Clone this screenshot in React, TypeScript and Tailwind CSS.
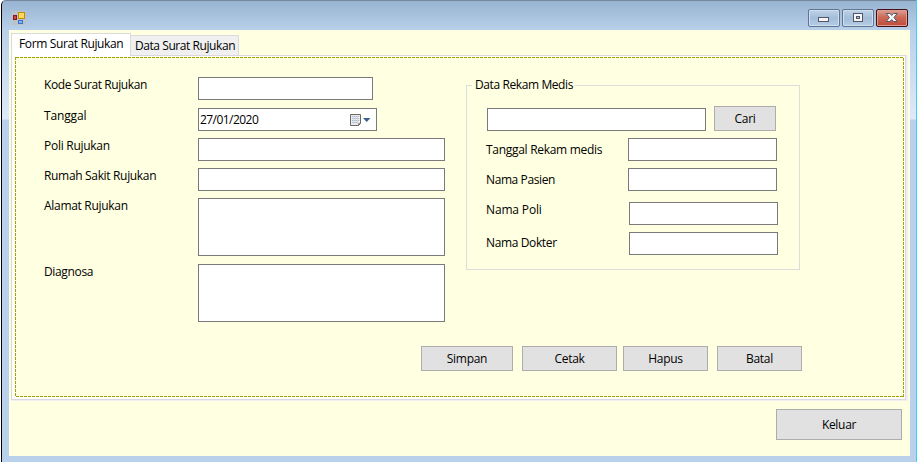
import React from "react";

function Field({ label, lw = "w-[154px]", className, box, track }: { label: string; lw?: string; className: string; box: string; track: string }) {
  return (
    <div className={`flex items-start ${className}`}>
      <span className={`${lw} shrink-0 leading-4 whitespace-nowrap ${track}`}>{label}</span>
      <div className={`shrink-0 border border-[#7a7a7a] bg-white ${box}`} />
    </div>
  );
}

function Button({ children, className }: { children: React.ReactNode; className: string }) {
  return (
    <button className={`flex shrink-0 items-center justify-center border border-[#adadad] bg-[#e1e1e1] leading-4 tracking-[-0.3px] ${className}`}>
      {children}
    </button>
  );
}

function Caption({ kind }: { kind: "min" | "max" | "close" }) {
  const close = kind === "close";
  return (
    <div
      className={`flex h-[18px] w-8 items-center justify-center rounded-[2px] border ${
        close
          ? "border-[#43101a] bg-linear-to-b from-[#dca096] from-0% via-[#cb6a57] via-45% to-[#c04a36] shadow-[inset_0_0_0_1px_#dd9d92]"
          : "border-[#5f7590] bg-linear-to-b from-[#c0d3e8] via-[#a3bdd9] to-[#b5cde6] shadow-[inset_0_0_0_1px_#cfdff0]"
      }`}
    >
      <svg width="14" height="12" viewBox="0 0 14 12" shapeRendering={close ? "auto" : "crispEdges"}>
        {kind === "min" && <rect x="1.5" y="5.5" width="10" height="4" rx="1" fill="#f6f6f6" stroke="#535666" />}
        {kind === "max" && (
          <>
            <rect x="2.5" y="1.5" width="9" height="8" fill="#f6f6f6" stroke="#535666" />
            <rect x="5.5" y="4.5" width="3" height="2" fill="#a9c1dc" stroke="#535666" />
          </>
        )}
        {close && (
          <path d="M1.2 1.5H4.9L6.7 3.4L8.5 1.5H12.2L9 5.5L12.2 9.5H8.5L6.7 7.6L4.9 9.5H1.2L4.4 5.5Z" fill="#f8f8f8" stroke="#535666" />
        )}
      </svg>
    </div>
  );
}

export default function App() {
  return (
    <div className="relative flex h-[462px] w-[917px] flex-col overflow-hidden rounded-tl-[5px] border-r border-l border-r-[#35d3f5] border-l-white bg-[#b9d1ea] font-['Open_Sans','Noto_Sans',sans-serif] text-[12px] text-black">
      <div className="flex min-h-0 flex-1 flex-col rounded-tl-[5px] border-t border-l border-t-[#74879d] border-l-black bg-[linear-gradient(to_bottom,#98b4d2_0px,#b9d1ea_30px,#dfeaf7_118px,#b9d1ea_119px)] pr-[6px] pb-[6px] pl-[7px]">
        <header className="flex h-[29px] shrink-0 justify-between pt-2 pr-[2px] pl-[3px]">
          <svg className="mt-[2px]" width="14" height="14" viewBox="0 0 14 14" shapeRendering="crispEdges">
            <rect width="14" height="14" fill="#bac3cc" />
            <rect x="6.5" y="1.5" width="6" height="6" fill="#ffd75b" stroke="#c18b08" />
            <rect x="1.5" y="4.5" width="3" height="4" fill="#c94b43" stroke="#8d1414" />
            <rect x="6.5" y="9.5" width="4" height="3" fill="#83b2f5" stroke="#3c6fcb" />
          </svg>
          <div className="flex gap-[2px]">
            <Caption kind="min" />
            <Caption kind="max" />
            <Caption kind="close" />
          </div>
        </header>

        <main className="flex min-h-0 flex-1 flex-col bg-[#ffffe1] pt-[3px] pl-[2px]">
          <nav className="flex h-[22px] shrink-0 items-end">
            <div className="z-10 -mb-px h-[23px] w-[120px] shrink-0 border border-b-0 border-[#dadada] bg-white pl-[7px] leading-[20px] tracking-[-0.37px] whitespace-nowrap">
              Form Surat Rujukan
            </div>
            <div className="h-5 w-[108px] shrink-0 border border-b-0 border-l-0 border-[#dadada] bg-[#f0f0f0] pl-1 leading-[20px] tracking-[-0.43px] whitespace-nowrap">
              Data Surat Rujukan
            </div>
          </nav>

          <section className="h-[346px] w-[897px] shrink-0 border-r-2 border-b border-[#f0f0f0]">
            <div className="h-[345px] w-[895px] border border-[#d9d9dc] bg-white pt-px pr-px pb-[2px] pl-[3px]">
              <div className="relative h-[340px] w-[889px] bg-[#ffffe1]">
                <svg className="pointer-events-none absolute inset-0" width="889" height="340" shapeRendering="crispEdges">
                  <rect x="0.5" y="0.5" width="888" height="339" fill="none" stroke="#a0a000" strokeDasharray="3 1" />
                </svg>
                <div className="flex h-[289px] items-start pt-5 pl-[29px]">
                  <div className="flex w-[422px] shrink-0 flex-col">
                    <Field label="Kode Surat Rujukan" track="tracking-[-0.4px]" className="h-[31px]" box="h-[23px] w-[175px]" />
                    <div className="flex h-[30px] items-start">
                      <span className="w-[154px] shrink-0 leading-4 tracking-[-0.15px]">Tanggal</span>
                      <div className="flex h-[23px] w-[179px] items-center border border-[#7a7a7a] bg-white pr-[5px] pl-px">
                        <span className="flex-1 tracking-[-0.55px]">27/01/2020</span>
                        <svg width="21" height="14" viewBox="0 0 21 14">
                          <path d="M.5 1.5H10.5V10.5L8.5 12.5H.5Z" fill="#e9edf2" stroke="#74655f" />
                          <path d="M2 3.5H9M2 5.5H9M2 7.5H9M2 9.5H8" stroke="#aebccb" />
                          <path d="M3.5 3V11M5.5 3V11M7.5 3V11" stroke="#d4dce5" strokeWidth=".7" />
                          <path d="M8.5 12.5V10.5H10.5Z" fill="#74655f" stroke="#74655f" strokeWidth=".5" />
                          <path d="M13 5H20.4L16.7 9Z" fill="#3e5d8c" />
                        </svg>
                      </div>
                    </div>
                    <Field label="Poli Rujukan" track="tracking-[-0.27px]" className="h-[30px]" box="h-[23px] w-[247px]" />
                    <Field label="Rumah Sakit Rujukan" track="tracking-[-0.33px]" className="h-[30px]" box="h-[23px] w-[247px]" />
                    <Field label="Alamat Rujukan" track="tracking-[-0.3px]" className="h-[66px]" box="h-[58px] w-[247px]" />
                    <Field label="Diagnosa" track="tracking-[-0.35px]" className="h-[58px]" box="h-[58px] w-[247px]" />
                  </div>

                  <fieldset className="mt-2 h-[185px] w-[334px] border border-[#dcdcdc]">
                    <div className="-mt-[9px] ml-[5px] w-[103px] bg-[#ffffe1] pl-[3px] leading-4 tracking-[-0.4px] whitespace-nowrap">Data Rekam Medis</div>
                    <div className="flex h-[45px] items-start gap-2 pt-[13px] pl-5">
                      <div className="mt-[2px] h-[23px] w-[219px] border border-[#7a7a7a] bg-white" />
                      <Button className="h-[25px] w-[62px]">Cari</Button>
                    </div>
                    <div className="pl-[19px]">
                      <Field label="Tanggal Rekam medis" track="tracking-[-0.29px]" lw="w-[142px] pt-1" className="h-[30px]" box="h-[23px] w-[149px]" />
                      <Field label="Nama Pasien" track="tracking-[-0.4px]" lw="w-[142px] pt-1" className="h-[34px]" box="h-[23px] w-[149px]" />
                      <Field label="Nama Poli" track="tracking-[-0.15px]" lw="w-[143px]" className="h-[30px]" box="h-[23px] w-[149px]" />
                      <Field label="Nama Dokter" track="tracking-[-0.37px]" lw="w-[143px] pt-[3px]" className="h-[23px]" box="h-[23px] w-[149px]" />
                    </div>
                  </fieldset>
                </div>
                <div className="flex pl-[406px]">
                  <Button className="h-[25px] w-[92px]">Simpan</Button>
                  <Button className="ml-[9px] h-[25px] w-[95px]">Cetak</Button>
                  <Button className="ml-[6px] h-[25px] w-[85px]">Hapus</Button>
                  <Button className="ml-[9px] h-[25px] w-[85px]">Batal</Button>
                </div>
              </div>
            </div>
          </section>
          <footer className="flex justify-end pt-2 pr-2">
            <Button className="h-[31px] w-[126px]">Keluar</Button>
          </footer>
        </main>
      </div>
      <div className="absolute top-[229px] -right-px h-[5px] w-px bg-black" />
    </div>
  );
}
